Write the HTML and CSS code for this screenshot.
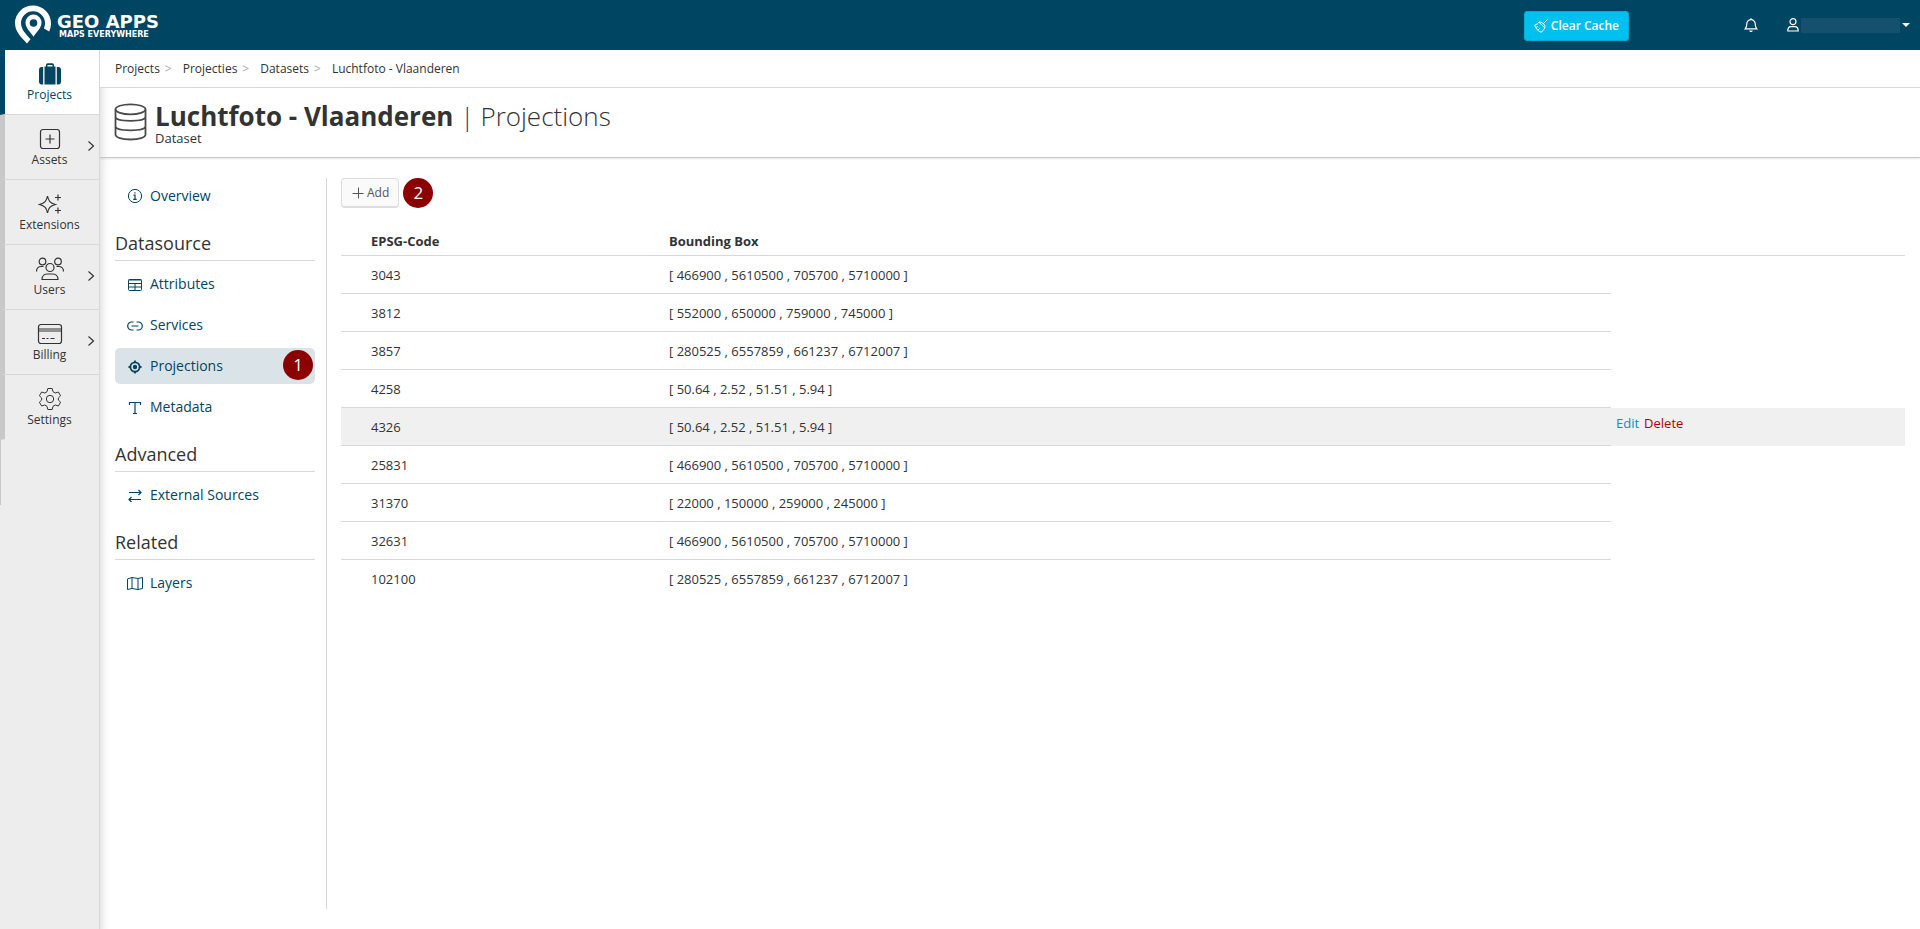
FILE: index.html
```html
<!DOCTYPE html>
<html lang="en">
<head>
<meta charset="utf-8">
<title>Luchtfoto - Vlaanderen | Projections</title>
<link rel="stylesheet" href="styles.css">
</head>
<body>
<header class="topbar">
  <a class="logo" href="#">
    <svg class="logo-mark" width="40" height="40" viewBox="0 0 40 40">
      <path d="M14 38.500C8 32 2 26.500 2 18A18 17.500 0 0 1 20 0.500C30 0.500 38 8.500 38 18C38 21.500 37.300 24 36.200 26.500L31 23.500C31.600 21.500 32 20 32 18A12 12 0 0 0 20 6.200A12 12 0 0 0 8 18C8 24 12.500 29 17.500 34.200z" fill="#fff"/>
      <path d="M20.500 9.500a8 8 0 0 0-8 8.200c0 5 4.500 8.800 8 14 3.500-5.200 8-9 8-14a8 8 0 0 0-8-8.200z" fill="#fff"/>
      <circle cx="20.500" cy="18" r="3.800" fill="#004562"/>
    </svg>
    <span class="logo-text"><span class="logo-name">GEO APPS</span><span class="logo-tag">MAPS EVERYWHERE</span></span>
  </a>
  <div class="topbar-tools">
    <button class="btn-cache" type="button">
      <svg width="14" height="14" viewBox="0 0 14 14" fill="none" stroke="currentColor"><path d="M13.500.5 9 5M5 3.200l5.800 5.800M5 3.200C4 4.700 2.500 5.500.7 6c.8 3.500 3.300 6 6.300 7.300 1.700-1 2.800-2.500 3.800-4.300.5-2.500-.5-3.700-1.800-4.500C7.500 3 6.500 3 5 3.200zM2 8.500l2-1M4 11l2-2"/></svg>
      Clear Cache
    </button>
    <button class="icon-btn" type="button" aria-label="Notifications">
      <svg width="14" height="14" viewBox="0 0 14 14" fill="none" stroke="currentColor" stroke-width="1.200"><path d="M1.200 10.800c1.300-1.300 1.600-2.300 1.600-5a4.200 4.200 0 0 1 8.400 0c0 2.700.3 3.700 1.600 5zM7 1.500V.3M5.700 12.500a1.400 1.400 0 0 0 2.600 0"/></svg>
    </button>
    <button class="user-btn" type="button" aria-label="User menu">
      <svg width="12" height="14" viewBox="0 0 12 14" fill="none" stroke="currentColor" stroke-width="1.200"><circle cx="6" cy="3.700" r="3"/><path d="M.8 13c0-3 1.500-4.400 3.200-4.400h4c1.700 0 3.200 1.400 3.200 4.400z"/></svg>
      <span class="user-name"></span>
      <span class="caret"></span>
    </button>
  </div>
</header>
<div class="shell">
  <nav class="mainnav" aria-label="Main">
    <a class="nav-item active" href="#">
      <svg width="24" height="24" viewBox="0 0 24 24" fill="currentColor"><path d="M6.500 4.500h11v18h-11zM8 5V3q0-1.700 1.700-1.700h4.600Q16 1.300 16 3v2h-1.500V3h-5v2zM5.200 5v17.500H3.700Q1 22.500 1 19.500V8q0-3 2.700-3zM18.800 5v17.500h1.500q2.700 0 2.700-3V8q0-3-2.700-3z"/></svg>
      <span>Projects</span>
    </a>
    <a class="nav-item" href="#">
      <svg width="24" height="24" viewBox="0 0 24 24" fill="none" stroke="currentColor" stroke-width="1.200"><rect x="2.500" y="2.500" width="19" height="19" rx="2.500"/><path d="M12 7.500v9M7.500 12h9"/></svg>
      <span>Assets</span>
      <svg class="chev" width="8" height="12" viewBox="0 0 8 12" fill="none" stroke="currentColor" stroke-width="1.200"><path d="m1.500 1.500 5 4.500-5 4.500"/></svg>
    </a>
    <a class="nav-item" href="#">
      <svg width="24" height="24" viewBox="0 0 24 24" fill="none" stroke="currentColor" stroke-width="1.200"><path d="M9.500 4c1 5 2.500 7 8 8.500-5.500 1.500-7 3.500-8 8.500-1-5-2.500-7-8-8.500 5.500-1.500 7-3.500 8-8.500zM20 2.500v6M17 5.500h6M20 15.500v6M17 18.500h6"/></svg>
      <span>Extensions</span>
    </a>
    <a class="nav-item" href="#">
      <svg width="30" height="24" viewBox="0 0 30 24" fill="none" stroke="currentColor" stroke-width="1.200"><circle cx="7.500" cy="4.500" r="3.300"/><circle cx="23" cy="4.500" r="3.300"/><circle cx="15" cy="10.500" r="4"/><path d="M1.500 14.500C1.500 11 4 9.500 6.500 9.500h2M28.500 14.500c0-3.500-2.500-5-5-5h-2M7 22.500c0-4 3-5.500 5.500-5.500h5c2.500 0 5.500 1.500 5.500 5.500z"/></svg>
      <span>Users</span>
      <svg class="chev" width="8" height="12" viewBox="0 0 8 12" fill="none" stroke="currentColor" stroke-width="1.200"><path d="m1.500 1.500 5 4.500-5 4.500"/></svg>
    </a>
    <a class="nav-item" href="#">
      <svg width="26" height="24" viewBox="0 0 26 24" fill="none" stroke="currentColor" stroke-width="1.200"><rect x="1.500" y="2.500" width="23" height="19" rx="2.500"/><path d="M1.500 7h23M1.500 9h23M5 16.500h3M9.500 16.500h2M13.500 16.500h4"/></svg>
      <span>Billing</span>
      <svg class="chev" width="8" height="12" viewBox="0 0 8 12" fill="none" stroke="currentColor" stroke-width="1.200"><path d="m1.500 1.500 5 4.500-5 4.500"/></svg>
    </a>
    <a class="nav-item last" href="#">
      <svg width="24" height="24" viewBox="0 0 24 24" fill="none" stroke="currentColor" stroke-linejoin="round"><path d="M9.800 1.500h4.400l.8 3.200 2.200 1.300 3.200-1 2.200 3.800L20.300 11v2l2.300 2.200-2.200 3.800-3.200-1-2.200 1.300-.8 3.200H9.800L9 19.300 6.800 18l-3.200 1-2.200-3.800L3.700 13v-2L1.400 8.800 3.600 5l3.200 1L9 4.700z"/><circle cx="12" cy="12" r="3.700"/></svg>
      <span>Settings</span>
    </a>
    <div class="nav-rest"></div>
  </nav>
  <main class="page">
    <nav class="crumbs" aria-label="Breadcrumb">
      <a href="#">Projects</a><a href="#">Projecties</a><a href="#">Datasets</a><a href="#">Luchtfoto - Vlaanderen</a>
    </nav>
    <div class="titlebar">
      <svg width="34" height="38" viewBox="0 0 34 38" fill="none" stroke="#4a4a4a" stroke-width="1.800"><ellipse cx="16.500" cy="6.300" rx="15" ry="5"/><path d="M1.500 6.500v25c0 3 6.500 5 15 5s15-2 15-5v-25M1.500 13.500c0 3 6.500 4.300 15 4.300s15-1.300 15-4.300M1.500 23c0 3 6.500 4.300 15 4.300s15-1.300 15-4.300"/></svg>
      <div>
        <h1><strong>Luchtfoto - Vlaanderen</strong><span class="sep">|</span><span class="sub">Projections</span></h1>
        <p>Dataset</p>
      </div>
    </div>
    <div class="content">
      <nav class="subnav" aria-label="Dataset">
        <a class="sub-item" href="#"><svg width="16" height="16" viewBox="0 0 16 16" fill="none" stroke="currentColor"><circle cx="8" cy="8" r="6.600"/><path d="M8 4.200v1.300M6.500 7.200H8v4M6.300 11.300h3.400" stroke-width="1.200"/></svg>Overview</a>
        <h2>Datasource</h2>
        <a class="sub-item" href="#"><svg width="16" height="16" viewBox="0 0 16 16" fill="none" stroke="currentColor"><rect x="1.500" y="3.500" width="13" height="11" rx="1"/><path d="M1.500 4h13M1.500 7.500h13M1.500 11h13M8 7.500v7"/></svg>Attributes</a>
        <a class="sub-item" href="#"><svg width="16" height="16" viewBox="0 0 16 16" fill="none" stroke="currentColor" stroke-width="1.200"><path d="M6.500 13H4.700a4 4 0 0 1 0-8h1.800M9.500 5h1.800a4 4 0 0 1 0 8H9.500M4.500 9h7"/></svg>Services</a>
        <a class="sub-item current" href="#"><svg width="16" height="16" viewBox="0 0 16 16" fill="none" stroke="currentColor" stroke-width="1.800"><circle cx="8" cy="9" r="4.600"/><circle cx="8" cy="9" r="2.200" fill="currentColor" stroke="none"/><path d="M8 2.500v2M8 13.500v2M1.500 9h2M12.500 9h2"/></svg>Projections<span class="marker marker-nav">1</span></a>
        <a class="sub-item" href="#"><svg width="16" height="16" viewBox="0 0 16 16" fill="none" stroke="currentColor"><path d="M2.500 6V3.500h11V6M8 3.500v11M6 14.500h4" stroke-width="1.200"/></svg>Metadata</a>
        <h2>Advanced</h2>
        <a class="sub-item" href="#"><svg width="16" height="16" viewBox="0 0 16 16" fill="none" stroke="currentColor" stroke-width="1.200"><path d="M2 5.500h12M11.500 3 14 5.500 11.500 8M14 12.500H2M4.500 10 2 12.500 4.500 15"/></svg>External Sources</a>
        <h2>Related</h2>
        <a class="sub-item" href="#"><svg width="16" height="16" viewBox="0 0 16 16" fill="none" stroke="currentColor"><path d="M.5 4 5 2.500l6 1L15.500 2.500v11L11 14.500l-6-1-4.500 1zM5 2.500v11M11 3.500v11"/></svg>Layers</a>
      </nav>
      <section class="panel">
        <div class="toolbar">
          <button class="btn-add" type="button"><svg width="12" height="12" viewBox="0 0 12 12" fill="none" stroke="currentColor"><path d="M6.500.5v11M.5 6.500h11"/></svg>Add</button>
          <span class="marker">2</span>
        </div>
        <table class="grid">
          <colgroup><col class="c-code"><col class="c-box"><col class="c-act"></colgroup>
          <thead><tr><th>EPSG-Code</th><th>Bounding Box</th><th></th></tr></thead>
          <tbody>
            <tr><td>3043</td><td>[ 466900 , 5610500 , 705700 , 5710000 ]</td><td></td></tr>
            <tr><td>3812</td><td>[ 552000 , 650000 , 759000 , 745000 ]</td><td></td></tr>
            <tr><td>3857</td><td>[ 280525 , 6557859 , 661237 , 6712007 ]</td><td></td></tr>
            <tr><td>4258</td><td>[ 50.64 , 2.52 , 51.51 , 5.94 ]</td><td></td></tr>
            <tr class="hover"><td>4326</td><td>[ 50.64 , 2.52 , 51.51 , 5.94 ]</td><td class="actions"><a class="edit" href="#">Edit</a><a class="delete" href="#">Delete</a></td></tr>
            <tr><td>25831</td><td>[ 466900 , 5610500 , 705700 , 5710000 ]</td><td></td></tr>
            <tr><td>31370</td><td>[ 22000 , 150000 , 259000 , 245000 ]</td><td></td></tr>
            <tr><td>32631</td><td>[ 466900 , 5610500 , 705700 , 5710000 ]</td><td></td></tr>
            <tr><td>102100</td><td>[ 280525 , 6557859 , 661237 , 6712007 ]</td><td></td></tr>
          </tbody>
        </table>
      </section>
    </div>
  </main>
</div>
</body>
</html>
```
FILE: styles.css
```css
* { box-sizing: border-box; }
body {
  margin: 0;
  min-height: 100vh;
  display: flex;
  flex-direction: column;
  font: 13px/18px "Open Sans", "Noto Sans", sans-serif;
  color: #333;
  background: #fff;
}
a { color: inherit; text-decoration: none; }
button { font: inherit; cursor: pointer; }
h1, h2, p { margin: 0; font-weight: 400; }
svg { flex: none; }

.topbar {
  height: 50px;
  display: flex;
  align-items: center;
  justify-content: space-between;
  padding: 0 10px 0 13px;
  background: #004562;
  color: #fff;
}
.logo { display: flex; align-items: center; gap: 4px; }
.logo-text {
  display: flex;
  flex-direction: column;
  padding-top: 3px;
  font-family: "DejaVu Sans", sans-serif;
  font-weight: 700;
}
.logo-name { font-size: 18px; line-height: 17px; }
.logo-tag { font-size: 8px; line-height: 10px; padding-left: 2px; }
.topbar-tools { display: flex; align-items: center; }
.btn-cache {
  height: 30px;
  display: flex;
  align-items: center;
  gap: 3px;
  margin: 2px 115px 0 0;
  padding: 0 9px;
  border: 1px solid #00acd6;
  border-radius: 3px;
  background: #00c0ef;
  color: #fff;
  font-weight: 600;
  font-size: 12px;
}
.icon-btn, .user-btn {
  display: flex;
  align-items: center;
  padding: 0;
  border: 0;
  background: none;
  color: #fff;
}
.icon-btn { margin-right: 29px; }
.user-name { width: 99px; height: 15px; margin: 0 2px; background: #15506e; }
.caret { border: 4px solid transparent; border-top-color: #fff; border-bottom: 0; }

.shell { flex: 1; display: flex; }
.mainnav {
  width: 100px;
  display: flex;
  flex-direction: column;
  background: #ededed;
  box-shadow: 0 10px 10px rgba(0, 0, 0, .2);
}
.nav-item {
  position: relative;
  height: 65px;
  display: flex;
  flex-direction: column;
  align-items: center;
  padding: 12px 5px 0 0;
  border: solid #d8d8d8;
  border-width: 0 1px 1px 0;
  border-left: 5px solid #c8c8c8;
  font-size: 12px;
  line-height: 17px;
}
.nav-item.active { background: #fff; border-left-color: #004562; color: #004562; }
.nav-item.last { border-bottom-color: #ededed; }
.chev { position: absolute; right: 4px; top: 25px; }
.nav-rest { flex: 1; border-right: 1px solid #d8d8d8; }
.nav-rest::before { content: ""; display: block; height: 65px; border-left: 1px solid #c8c8c8; }

.page { flex: 1; display: flex; flex-direction: column; min-width: 0; }
.crumbs {
  position: relative;
  height: 38px;
  display: flex;
  align-items: center;
  padding-left: 15px;
  border-bottom: 1px solid #d8d8d8;
  background: #fff;
  font-size: 12px;
}
.crumbs a:not(:last-child)::after { content: ">"; margin: 0 11px 0 5px; color: #aaa; }
.titlebar {
  height: 70px;
  display: flex;
  gap: 7px;
  padding: 15px 15px 0 14px;
  border-bottom: 1px solid #c8c8c8;
  box-shadow: 0 1px 2px rgba(0, 0, 0, .1);
}
.titlebar h1 { font-size: 26px; line-height: 26px; }
.titlebar p { line-height: 18px; }
.sep { margin: 0 6px 0 7px; font-weight: 300; color: #004562; }
.sub { font-weight: 300; }

.content { flex: 1; display: flex; padding: 20px 15px; }
.subnav { width: 212px; padding-right: 11px; border-right: 1px solid #d8d8d8; }
.subnav h2 {
  height: 42px;
  margin-bottom: 5px;
  padding-top: 12px;
  border-bottom: 1px solid #d8d8d8;
  font-size: 18px;
  line-height: 24px;
}
.sub-item {
  position: relative;
  height: 36px;
  display: flex;
  align-items: center;
  gap: 7px;
  margin-bottom: 5px;
  padding: 0 0 1px 12px;
  border-radius: 5px;
  color: #004562;
  font-size: 14px;
}
.sub-item.current { background: #dae3e8; }
.marker {
  width: 30px;
  height: 30px;
  display: flex;
  align-items: center;
  justify-content: center;
  border-radius: 50%;
  background: #8b0000;
  color: #fff;
  font-size: 17px;
}
.marker-nav { position: absolute; right: 2px; top: 2px; }

.panel { flex: 1; min-width: 0; padding-left: 14px; }
.toolbar { display: flex; gap: 4px; height: 38px; align-items: flex-start; }
.btn-add {
  height: 30px;
  display: flex;
  align-items: center;
  gap: 3px;
  padding: 0 9px 0 10px;
  border: 1px solid #ddd;
  border-bottom-width: 2px;
  border-radius: 4px;
  background: #fafafa;
  color: #555;
  font-size: 12px;
}
.grid { width: 100%; table-layout: fixed; border-collapse: separate; border-spacing: 0; }
.c-code { width: 298px; }
.c-act { width: 294px; }
.grid th, .grid td {
  height: 38px;
  padding: 0 0 0 30px;
  border-bottom: 1px solid #d8d8d8;
  text-align: left;
}
.grid th { height: 40px; padding-top: 10px; }
.grid tbody td:last-child { border-bottom-color: transparent; }
.grid tbody tr:last-child td { border-bottom: 0; }
.grid .hover td { background: #f0f0f0; }
.grid td.actions { padding: 6px 0 0 5px; vertical-align: top; }
.edit { margin-right: 5px; color: #0090d0; }
.delete { color: #b00000; }
```
